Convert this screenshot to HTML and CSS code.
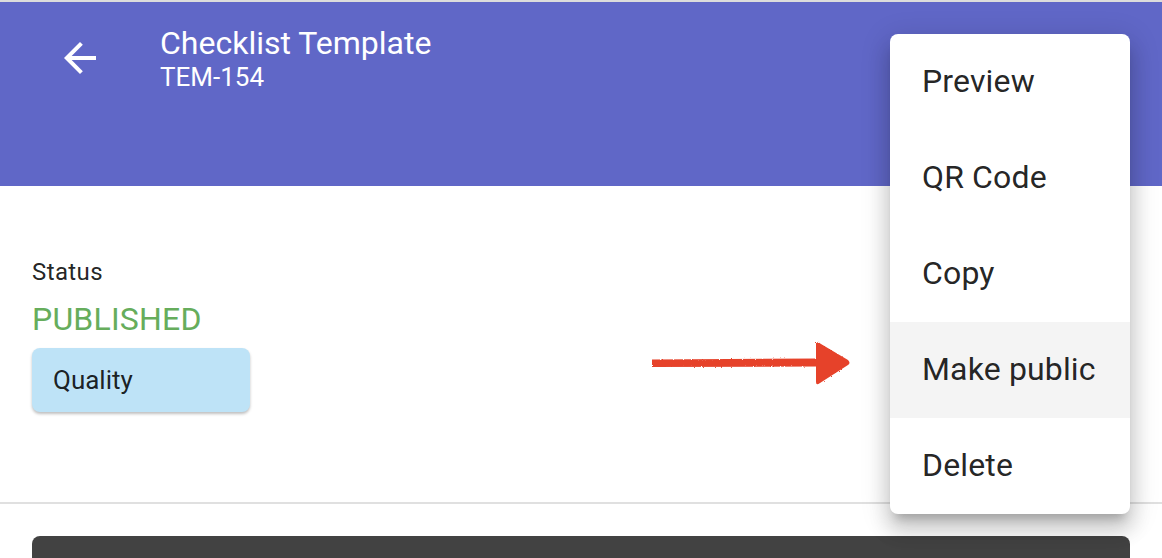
FILE: index.html
```html
<!DOCTYPE html>
<html lang="en">
<head>
<meta charset="utf-8">
<title>Checklist Template</title>
<link rel="stylesheet" href="styles.css">
</head>
<body>
<div class="chrome-strip"></div>
<header class="app-header">
  <button class="back-btn" aria-label="Back">
    <svg viewBox="0 0 24 24" width="48" height="48"><path fill="#fff" d="M20 11H7.83l5.59-5.59L12 4l-8 8 8 8 1.41-1.41L7.83 13H20v-2z"/></svg>
  </button>
  <div class="titles">
    <div class="title">Checklist Template</div>
    <div class="subtitle">TEM-154</div>
  </div>
</header>
<main class="content">
  <section class="info">
    <div class="label">Status</div>
    <div class="status">PUBLISHED</div>
    <div class="chip">Quality</div>
  </section>
  <div class="divider"></div>
  <div class="dark-panel"></div>
</main>

<svg class="annot-arrow" width="206" height="50" viewBox="0 0 206 50">
  <defs>
    <filter id="rough" x="-5%" y="-20%" width="110%" height="140%">
      <feTurbulence type="fractalNoise" baseFrequency="0.9" numOctaves="2" seed="3" result="n"/>
      <feDisplacementMap in="SourceGraphic" in2="n" scale="2.5"/>
    </filter>
  </defs>
  <g filter="url(#rough)" fill="#e6432b">
    <path d="M4 21.5 L170 20.5 L170 28.5 L4 29 Z"/>
    <path d="M168 5 Q170 3 173 6 L200 22 Q203 25 200 27 L172 45 Q168 48 168 44 Z"/>
  </g>
</svg>

<div class="menu">
  <div class="menu-item">Preview</div>
  <div class="menu-item">QR Code</div>
  <div class="menu-item">Copy</div>
  <div class="menu-item active">Make public</div>
  <div class="menu-item">Delete</div>
</div>
</body>
</html>
```
FILE: styles.css
```css
* { box-sizing: border-box; }
html, body {
  margin: 0;
  padding: 0;
  background: #fff;
  font-family: Roboto, "Noto Sans", Arial, sans-serif;
  color: rgba(0,0,0,0.87);
  overflow: hidden;
}
.chrome-strip {
  height: 2px;
  background: #dcdcdc;
}
.app-header {
  height: 184px;
  background: #6067c7;
  display: flex;
  align-items: flex-start;
  padding: 22px 0 0 56px;
  color: #fff;
}
.back-btn {
  width: 48px;
  height: 48px;
  margin-top: 10px;
  margin-right: 56px;
  padding: 0;
  border: 0;
  background: transparent;
  display: flex;
}
.titles {
  display: flex;
  flex-direction: column;
}
.title {
  font-size: 32px;
  line-height: 38px;
  font-weight: 400;
}
.subtitle {
  font-size: 26px;
  line-height: 30px;
  font-weight: 400;
}
.content {
  padding-top: 70px;
}
.info {
  padding: 0 32px;
  height: 246px;
}
.label {
  font-size: 24px;
  line-height: 32px;
  letter-spacing: 0.4px;
}
.status {
  margin-top: 11px;
  font-size: 32px;
  line-height: 40px;
  letter-spacing: 0.2px;
  color: #66ad5c;
}
.chip {
  margin-top: 9px;
  width: 218px;
  height: 64px;
  border-radius: 8px;
  background: #bee3f7;
  box-shadow: 0 2px 3px rgba(0,0,0,0.25);
  font-size: 26px;
  line-height: 64px;
  padding-left: 21px;
}
.divider {
  height: 2px;
  background: #e0e0e0;
}
.dark-panel {
  margin: 32px 32px 0;
  height: 22px;
  background: #424242;
  border-radius: 8px 8px 0 0;
}
.annot-arrow {
  position: absolute;
  left: 648px;
  top: 338px;
}
.menu {
  position: absolute;
  left: 890px;
  top: 34px;
  width: 240px;
  background: #fff;
  border-radius: 8px;
  overflow: hidden;
  box-shadow: 0 10px 10px -6px rgba(0,0,0,0.2), 0 16px 20px 2px rgba(0,0,0,0.14), 0 6px 28px 4px rgba(0,0,0,0.12);
}
.menu-item {
  height: 96px;
  display: flex;
  align-items: center;
  padding: 0 0 2px 32px;
  font-size: 32px;
  line-height: 48px;
  letter-spacing: 0.15px;
  color: rgba(0,0,0,0.87);
}
.menu-item.active {
  background: #f4f4f4;
}
```
